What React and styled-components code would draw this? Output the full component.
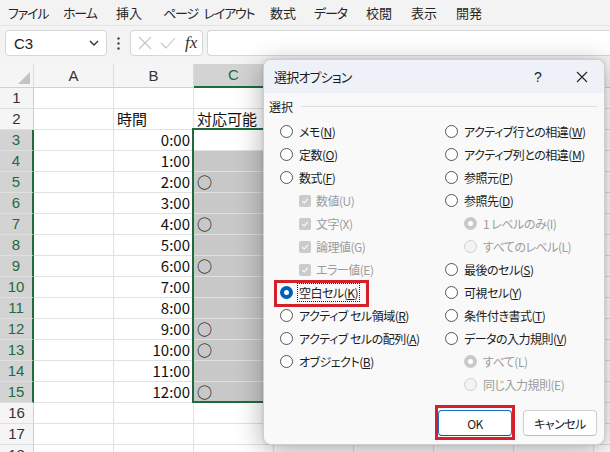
import React from "react";
import styled, { createGlobalStyle, css } from "styled-components";

const GlobalStyle = createGlobalStyle`
  html, body {
    margin: 0;
    padding: 0;
    background: #ffffff;
  }
  body {
    font-family: "Noto Sans CJK JP", "Noto Sans", sans-serif;
    font-feature-settings: "palt";
    color: #222;
  }
`;

const GREEN = "#1e6b41";
const RED = "#d4202b";

const Page = styled.div`
  position: relative;
  width: 610px;
  height: 452px;
  overflow: hidden;
  background: #fff;
`;

/* ---------- top menu ---------- */

const MenuBar = styled.div`
  display: flex;
  align-items: center;
  height: 25px;
  padding-left: 8px;
  background: #f3f3f3;
  border-bottom: 1px solid #e3e3e3;
  font-size: 13px;
  color: #262626;
  white-space: pre;
`;

const MenuItem = styled.span`
  flex-shrink: 0;
  width: ${(p) => p.$w}px;
  letter-spacing: ${(p) => (p.$kana ? "-1.2px" : "0")};
  word-spacing: 4px;
`;

const FormulaBar = styled.div`
  display: flex;
  align-items: center;
  height: 38px;
  padding: 0 0 4px 5px;
  box-sizing: border-box;
  background: #f3f3f3;
`;

const Box = styled.div`
  display: flex;
  align-items: center;
  height: 26px;
  box-sizing: border-box;
  background: #fff;
  border: 1px solid #d6d6d6;
  border-radius: 4px;
`;

const NameBox = styled(Box)`
  width: 102px;
  padding: 0 7px 0 8px;
  justify-content: space-between;
  font-family: "Liberation Sans", Arial, sans-serif;
  font-size: 15px;
  color: #222;
`;

const Dots = styled.div`
  width: 23px;
  display: flex;
  justify-content: center;
`;

const FxBox = styled(Box)`
  width: 73px;
  padding: 0 4px 0 7px;
  gap: 8px;
`;

const Fx = styled.span`
  font-family: "Liberation Serif", "Times New Roman", serif;
  font-style: italic;
  font-size: 17px;
  color: #333;
  margin-left: 1px;
`;

const FormulaInput = styled(Box)`
  flex: 1;
  margin-left: 4px;
  border-right: none;
  border-radius: 4px 0 0 4px;
`;

/* ---------- sheet ---------- */

const Sheet = styled.div`
  position: relative;
  display: grid;
  grid-template-columns: 34px repeat(8, 80px);
  grid-template-rows: 24px;
  grid-auto-rows: 21px;
  font-size: 15px;
  line-height: 20px;
`;

const Corner = styled.div`
  position: relative;
  background: #f5f5f5;
  border-right: 1px solid #dcdcdc;
  border-bottom: 1px solid #d0d0d0;
  &::after {
    content: "";
    position: absolute;
    right: 3px;
    bottom: 3px;
    width: 0;
    height: 0;
    border-left: 12px solid transparent;
    border-bottom: 12px solid #c3c3c3;
  }
`;

const ColHead = styled.div`
  display: flex;
  align-items: center;
  justify-content: center;
  font-family: "Liberation Sans", Arial, sans-serif;
  background: #f5f5f5;
  border-right: 1px solid #dcdcdc;
  border-bottom: 1px solid #d0d0d0;
  color: #333;
  ${(p) =>
    p.$active &&
    css`
      background: #d3d3d3;
      color: ${GREEN};
      border-bottom: 2px solid ${GREEN};
    `}
`;

const RowHead = styled.div`
  display: flex;
  align-items: center;
  justify-content: center;
  font-family: "Liberation Sans", Arial, sans-serif;
  background: #f5f5f5;
  border-right: 1px solid #d0d0d0;
  border-bottom: 1px solid #e0e0e0;
  color: #333;
  ${(p) =>
    p.$active &&
    css`
      background: #d3d3d3;
      color: ${GREEN};
      border-right: 2px solid ${GREEN};
    `}
`;

const Cell = styled.div`
  display: flex;
  align-items: center;
  justify-content: ${(p) => (p.$right ? "flex-end" : "flex-start")};
  padding: 0 3px 0 3px;
  overflow: visible;
  white-space: nowrap;
  background: ${(p) => (p.$selected ? "#c8c8c8" : "#fff")};
  border-right: 1px solid #e1e1e1;
  border-bottom: 1px solid #e1e1e1;
  color: #111;
`;

const Maru = styled.span`
  font-size: 15px;
  line-height: 18px;
  color: #000;
`;

const Selection = styled.div`
  position: absolute;
  left: 192px;
  top: 64px;
  width: 83px;
  height: 275px;
  box-sizing: border-box;
  border: 2px solid ${GREEN};
  pointer-events: none;
`;

/* ---------- dialog ---------- */

const Dialog = styled.div`
  position: absolute;
  left: 263px;
  top: 59px;
  width: 342px;
  height: 386px;
  box-sizing: border-box;
  display: flex;
  flex-direction: column;
  background: #f9f9f9;
  border: 1px solid #cfcfcf;
  border-radius: 8px;
  box-shadow: 0 6px 28px rgba(0, 0, 0, 0.32), 0 0 3px rgba(0, 0, 0, 0.12);
  overflow: hidden;
  font-size: 12px;
  color: #1b1b1b;
`;

const TitleBar = styled.div`
  display: flex;
  align-items: center;
  height: 33px;
  padding-left: 10px;
  background: #eef2f8;
  font-size: 13px;
`;

const Title = styled.div`
  flex: 1;
  letter-spacing: -0.8px;
`;

const TitleButton = styled.div`
  width: 44px;
  display: flex;
  justify-content: center;
  font-size: 14px;
  font-family: "Liberation Sans", Arial, sans-serif;
  color: #222;
`;

const Body = styled.div`
  display: flex;
  flex-direction: column;
  padding: 4px 7px 8px 5px;
  flex: 1;
`;

const GroupHead = styled.div`
  display: flex;
  align-items: center;
  gap: 8px;
  height: 18px;
  &::after {
    content: "";
    flex: 1;
    height: 1px;
    background: #dedede;
  }
`;

const Columns = styled.div`
  display: grid;
  grid-template-columns: 165px 1fr;
  margin-top: 5px;
  padding-left: 11px;
`;

const Column = styled.div`
  display: flex;
  flex-direction: column;
  align-items: flex-start;
`;

const Option = styled.div`
  position: relative;
  display: inline-flex;
  align-items: center;
  gap: 4px;
  height: 23px;
  padding-left: ${(p) => (p.$sub ? 19 : 0)}px;
  color: ${(p) => (p.$disabled ? "#9c9c9c" : "#1b1b1b")};
  white-space: nowrap;
  ${(p) =>
    p.$marked &&
    css`
      &::after {
        content: "";
        position: absolute;
        left: -6px;
        right: -10px;
        top: -1px;
        bottom: -3px;
        border: 3px solid ${RED};
      }
    `}
`;

const Radio = styled.span`
  position: relative;
  width: 13px;
  height: 13px;
  box-sizing: border-box;
  border-radius: 50%;
  flex-shrink: 0;
  border: 1px solid ${(p) => (p.$disabled ? "#cfcfcf" : "#555")};
  background: ${(p) => (p.$disabled ? "#f3f3f3" : "#fff")};
  margin-right: 1px;
  ${(p) =>
    p.$checked &&
    css`
      border: none;
      background: ${p.$disabled ? "#c9c9c9" : "#005fb8"};
      &::after {
        content: "";
        position: absolute;
        left: 4px;
        top: 4px;
        width: 5px;
        height: 5px;
        border-radius: 50%;
        background: #fff;
      }
    `}
`;

const Check = styled.span`
  display: flex;
  align-items: center;
  justify-content: center;
  width: 12px;
  height: 12px;
  border-radius: 2px;
  background: #cbcbcb;
  flex-shrink: 0;
`;

const Label = styled.span`
  padding: 0 1px;
  letter-spacing: -0.5px;
  ${(p) =>
    p.$focus &&
    css`
      outline: 1px dotted #222;
      outline-offset: 0px;
    `}
`;

const Footer = styled.div`
  display: flex;
  justify-content: flex-end;
  gap: 11px;
  margin-top: auto;
`;

const Button = styled.button`
  position: relative;
  width: 74px;
  height: 26px;
  box-sizing: border-box;
  font-family: inherit;
  font-feature-settings: "palt";
  font-size: 12px;
  letter-spacing: -0.5px;
  color: #1b1b1b;
  background: #fff;
  border: 1px solid #d0d0d0;
  border-bottom-color: #bdbdbd;
  border-radius: 4px;
  padding: 0;
  ${(p) =>
    p.$primary &&
    css`
      border: 1px solid #1c6fc0;
      border-bottom-color: #0f57a3;
    `}
  ${(p) =>
    p.$marked &&
    css`
      &::after {
        content: "";
        position: absolute;
        left: -4px;
        right: -4px;
        top: -6px;
        bottom: -5px;
        border: 3px solid ${RED};
      }
    `}
`;

const CheckMark = () => (
  <svg width="8" height="8" viewBox="0 0 8 8">
    <polyline points="1.2,4.2 3.2,6 6.8,1.8" fill="none" stroke="#fff" strokeWidth="1.1" />
  </svg>
);

// widths measured from where one menu entry starts to where the next one does
const menu = [
  { t: "ファイル", w: 55, kana: true },
  { t: "ホーム", w: 53, kana: true },
  { t: "挿入", w: 47 },
  { t: "ページ レイアウト", w: 107, kana: true },
  { t: "数式", w: 44 },
  { t: "データ", w: 52, kana: true },
  { t: "校閲", w: 45 },
  { t: "表示", w: 45 },
  { t: "開発", w: 45 },
];

const times = ["0:00", "1:00", "2:00", "3:00", "4:00", "5:00", "6:00", "7:00", "8:00", "9:00", "10:00", "11:00", "12:00"];
const marks = [5, 7, 9, 12, 13, 15];
const columns = ["A", "B", "C", "D", "E", "F", "G", "H"];

const Access = ({ text, k, plain }) => (
  <>
    {text}(
    {plain ? k : <u>{k}</u>})
  </>
);

const leftOptions = [
  { text: "メモ", k: "N" },
  { text: "定数", k: "O" },
  { text: "数式", k: "F" },
  { text: "数値", k: "U", check: true },
  { text: "文字", k: "X", check: true },
  { text: "論理値", k: "G", check: true },
  { text: "エラー値", k: "E", check: true },
  { text: "空白セル", k: "K", checked: true, marked: true },
  { text: "アクティブ セル領域", k: "R" },
  { text: "アクティブ セルの配列", k: "A" },
  { text: "オブジェクト", k: "B" },
];

const rightOptions = [
  { text: "アクティブ行との相違", k: "W" },
  { text: "アクティブ列との相違", k: "M" },
  { text: "参照元", k: "P" },
  { text: "参照先", k: "D" },
  { text: "1 レベルのみ", k: "I", sub: true, checked: true },
  { text: "すべてのレベル", k: "L", sub: true },
  { text: "最後のセル", k: "S" },
  { text: "可視セル", k: "Y" },
  { text: "条件付き書式", k: "T" },
  { text: "データの入力規則", k: "V" },
  { text: "すべて", k: "L", sub: true, checked: true },
  { text: "同じ入力規則", k: "E", sub: true },
];

const OptionRow = ({ o }) => {
  const disabled = o.check || o.sub;
  return (
    <Option $sub={disabled} $disabled={disabled} $marked={o.marked}>
      {o.check ? (
        <Check>
          <CheckMark />
        </Check>
      ) : (
        <Radio $checked={o.checked} $disabled={disabled} />
      )}
      <Label $focus={o.marked}>
        <Access text={o.text} k={o.k} plain={disabled} />
      </Label>
    </Option>
  );
};

export default function App() {
  const rows = [];
  for (let r = 1; r <= 18; r++) {
    const active = r >= 3 && r <= 15;
    let b = "";
    let c = "";
    if (r === 2) {
      b = "時間";
      c = "対応可能";
    }
    if (active) {
      b = times[r - 3];
      c = marks.includes(r) ? <Maru>○</Maru> : "";
    }
    rows.push(
      <React.Fragment key={r}>
        <RowHead $active={active}>{r}</RowHead>
        <Cell />
        <Cell $right={active}>{b}</Cell>
        <Cell $selected={r >= 4 && r <= 15}>{c}</Cell>
        {columns.slice(3).map((col) => (
          <Cell key={col} />
        ))}
      </React.Fragment>
    );
  }

  return (
    <Page>
      <GlobalStyle />
      <MenuBar>
        {menu.map((m) => (
          <MenuItem key={m.t} $w={m.w} $kana={m.kana}>
            {m.t}
          </MenuItem>
        ))}
      </MenuBar>
      <FormulaBar>
        <NameBox>
          C3
          <svg width="10" height="6" viewBox="0 0 10 6">
            <polyline points="1,1 5,5 9,1" fill="none" stroke="#333" strokeWidth="1.4" />
          </svg>
        </NameBox>
        <Dots>
          <svg width="3" height="13" viewBox="0 0 3 13">
            <circle cx="1.5" cy="1.5" r="1.2" fill="#444" />
            <circle cx="1.5" cy="6.5" r="1.2" fill="#444" />
            <circle cx="1.5" cy="11.5" r="1.2" fill="#444" />
          </svg>
        </Dots>
        <FxBox>
          <svg width="14" height="14" viewBox="0 0 14 14">
            <path d="M1 1 L13 13 M13 1 L1 13" stroke="#c4c4c4" strokeWidth="1.1" />
          </svg>
          <svg width="16" height="12" viewBox="0 0 16 12">
            <polyline points="1,6 6,11 15,1" fill="none" stroke="#c4c4c4" strokeWidth="1.1" />
          </svg>
          <Fx>fx</Fx>
        </FxBox>
        <FormulaInput />
      </FormulaBar>
      <Sheet>
        <Corner />
        {columns.map((col) => (
          <ColHead key={col} $active={col === "C"}>
            {col}
          </ColHead>
        ))}
        {rows}
        <Selection />
      </Sheet>

      <Dialog>
        <TitleBar>
          <Title>選択オプション</Title>
          <TitleButton>?</TitleButton>
          <TitleButton>
            <svg width="12" height="12" viewBox="0 0 12 12">
              <path d="M1 1 L11 11 M11 1 L1 11" stroke="#222" strokeWidth="1.1" />
            </svg>
          </TitleButton>
        </TitleBar>
        <Body>
          <GroupHead>選択</GroupHead>
          <Columns>
            <Column>
              {leftOptions.map((o) => (
                <OptionRow key={o.text} o={o} />
              ))}
            </Column>
            <Column>
              {rightOptions.map((o) => (
                <OptionRow key={o.text} o={o} />
              ))}
            </Column>
          </Columns>
          <Footer>
            <Button $primary $marked>
              OK
            </Button>
            <Button>キャンセル</Button>
          </Footer>
        </Body>
      </Dialog>
    </Page>
  );
}
